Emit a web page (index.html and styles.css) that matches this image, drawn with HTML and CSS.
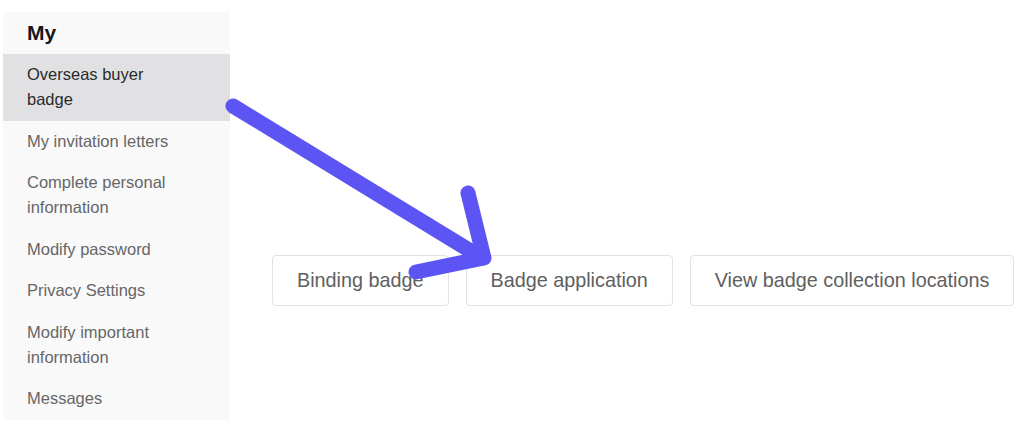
FILE: index.html
```html
<!DOCTYPE html>
<html>
<head>
<meta charset="utf-8">
<link rel="stylesheet" href="styles.css">
</head>
<body>
<div class="page">
  <aside class="sidebar">
    <div class="sidebar-title">My</div>
    <ul class="menu">
      <li class="menu-item active">Overseas buyer<br>badge</li>
      <li class="menu-item">My invitation letters</li>
      <li class="menu-item">Complete personal<br>information</li>
      <li class="menu-item">Modify password</li>
      <li class="menu-item">Privacy Settings</li>
      <li class="menu-item">Modify important<br>information</li>
      <li class="menu-item">Messages</li>
    </ul>
  </aside>
  <main class="content">
    <div class="actions">
      <button class="btn">Binding badge</button>
      <button class="btn">Badge application</button>
      <button class="btn">View badge collection locations</button>
    </div>
  </main>
  <svg class="arrow" width="1024" height="443" viewBox="0 0 1024 443">
    <g stroke="#5c55f3" stroke-width="15" stroke-linecap="round" stroke-linejoin="round" fill="none">
      <line x1="233" y1="106" x2="482" y2="258"/>
      <polyline points="468,193 484,258 416,272"/>
    </g>
  </svg>
</div>
</body>
</html>
```

FILE: styles.css
```css
html, body {
  margin: 0;
  padding: 0;
  background: #ffffff;
}

.page {
  position: relative;
  width: 1024px;
  height: 443px;
  display: flex;
  align-items: flex-start;
  font-family: "Liberation Sans", Arial, sans-serif;
}

.sidebar {
  width: 227px;
  flex-shrink: 0;
  margin-left: 3px;
  margin-top: 12px;
  background: #f9f9fa;
}

.sidebar-title {
  height: 42px;
  line-height: 42px;
  padding-left: 24px;
  font-size: 21px;
  font-weight: bold;
  color: #17171c;
}

.menu {
  list-style: none;
  margin: 0;
  padding: 0;
}

.menu-item {
  padding: 8.25px 0 8.25px 24px;
  line-height: 25px;
  font-size: 16.5px;
  color: #666666;
}

.menu-item.active {
  background: #e1e1e3;
  color: #2a2a2a;
}

.content {
  flex: 1;
  padding-top: 255px;
  padding-left: 42px;
}

.actions {
  display: flex;
  gap: 17px;
}

.btn {
  flex-shrink: 0;
  white-space: nowrap;
  height: 51px;
  padding: 0 24px;
  border: 1px solid #e2e2e4;
  border-radius: 4px;
  background: #ffffff;
  font-family: "Liberation Sans", Arial, sans-serif;
  font-size: 19.8px;
  color: #606060;
}

.arrow {
  position: absolute;
  left: 0;
  top: 0;
  pointer-events: none;
}
```
